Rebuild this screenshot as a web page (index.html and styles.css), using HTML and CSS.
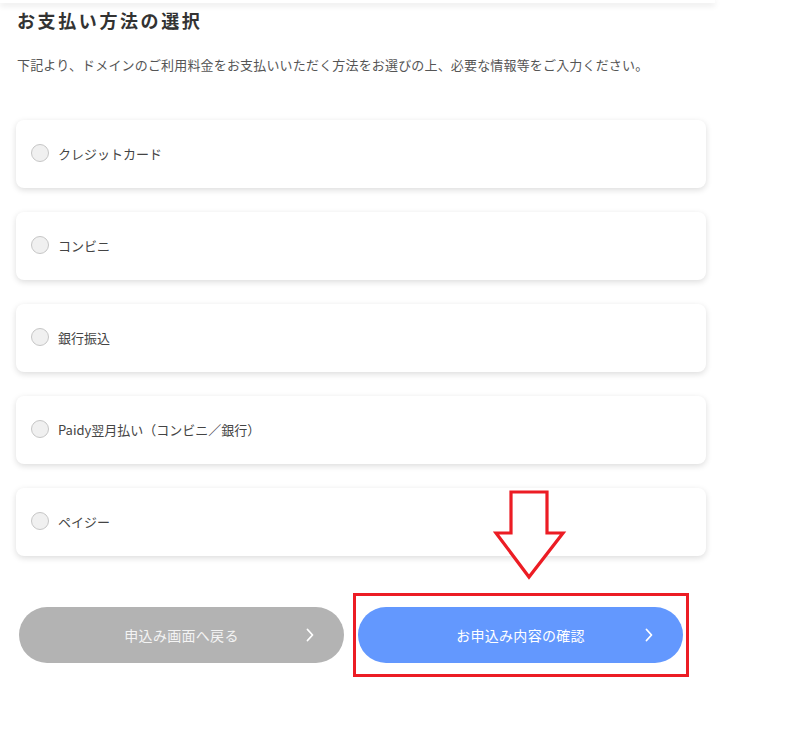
FILE: index.html
```html
<!DOCTYPE html>
<html lang="ja">
<head>
<meta charset="utf-8">
<title>お支払い方法の選択</title>
<link rel="stylesheet" href="styles.css">
</head>
<body>
<div class="page">
  <div class="top-strip"></div>
  <h2 class="title">お支払い方法の選択</h2>
  <p class="lead">下記より、ドメインのご利用料金をお支払いいただく方法をお選びの上、必要な情報等をご入力ください。</p>

  <div class="methods">
    <label class="method"><span class="radio"></span><span class="label">クレジットカード</span></label>
    <label class="method"><span class="radio"></span><span class="label">コンビニ</span></label>
    <label class="method"><span class="radio"></span><span class="label">銀行振込</span></label>
    <label class="method"><span class="radio"></span><span class="label">Paidy翌月払い（コンビニ／銀行）</span></label>
    <label class="method"><span class="radio"></span><span class="label">ペイジー</span></label>
  </div>

  <div class="actions">
    <a class="btn btn-back">申込み画面へ戻る<svg class="chev" viewBox="0 0 8 14" width="8" height="14"><polyline points="1.5,1.5 6.5,7 1.5,12.5" fill="none" stroke="#fff" stroke-width="1.8" stroke-linecap="round" stroke-linejoin="round"/></svg></a>
    <a class="btn btn-confirm">お申込み内容の確認<svg class="chev" viewBox="0 0 8 14" width="8" height="14"><polyline points="1.5,1.5 6.5,7 1.5,12.5" fill="none" stroke="#fff" stroke-width="1.8" stroke-linecap="round" stroke-linejoin="round"/></svg><span class="highlight"></span></a>
  </div>

  <svg class="pointer" width="74" height="92" viewBox="0 0 74 92">
    <polygon points="18,3 54,3 54,44 70,44 36,88 3,44 18,44" fill="#fff" stroke="#ec1c24" stroke-width="3.2" stroke-linejoin="miter"/>
  </svg>
</div>
</body>
</html>
```

FILE: styles.css
```css
* { box-sizing: border-box; }

html, body {
  margin: 0;
  padding: 0;
  background: #fff;
}

body {
  font-family: "Noto Sans CJK JP", "Noto Sans", "Liberation Sans", sans-serif;
  color: #333;
}

.page {
  position: relative;
  width: 722px;
  padding: 0 16px 60px 16px;
}

.top-strip {
  margin-left: -16px;
  width: 715px;
  height: 3px;
  background: #fff;
  box-shadow: 0 2px 6px rgba(0, 0, 0, 0.14);
}

.title {
  margin: 4px 0 0 1px;
  font-size: 18px;
  line-height: 26px;
  font-weight: 700;
  letter-spacing: 2.6px;
  color: #333;
}

.lead {
  margin: 22px 0 0 1px;
  font-size: 13px;
  line-height: 20px;
  letter-spacing: 0.17px;
  color: #555;
}

.methods {
  margin-top: 45px;
  display: flex;
  flex-direction: column;
  gap: 24px;
}

.method {
  display: flex;
  align-items: center;
  height: 68px;
  padding-left: 15px;
  background: #fff;
  border-radius: 8px;
  box-shadow: 0 2px 6px rgba(0, 0, 0, 0.14);
}

.radio {
  width: 18px;
  height: 18px;
  border-radius: 50%;
  background: #f0f0f0;
  border: 1px solid #c6c6c6;
  margin-top: -3px;
  flex: none;
}

.label {
  margin-left: 9px;
  font-size: 13px;
  line-height: 20px;
  color: #444;
}

.actions {
  margin-top: 51px;
  margin-left: 3px;
  display: flex;
  gap: 14px;
}

.btn {
  position: relative;
  display: flex;
  align-items: center;
  justify-content: center;
  width: 325px;
  height: 56px;
  border-radius: 28px;
  font-size: 14px;
  color: #fff;
  letter-spacing: 0.3px;
}

.btn-back {
  background: #b3b3b3;
  color: #f4f4f4;
}

.btn-confirm {
  background: #6398fe;
}

.chev {
  position: absolute;
  right: 30px;
  top: 21px;
}

.highlight {
  position: absolute;
  left: -5px;
  right: -6px;
  top: -14px;
  bottom: -14px;
  border: 3px solid #ec1c24;
}

.pointer {
  position: absolute;
  left: 493px;
  top: 489px;
}
```
